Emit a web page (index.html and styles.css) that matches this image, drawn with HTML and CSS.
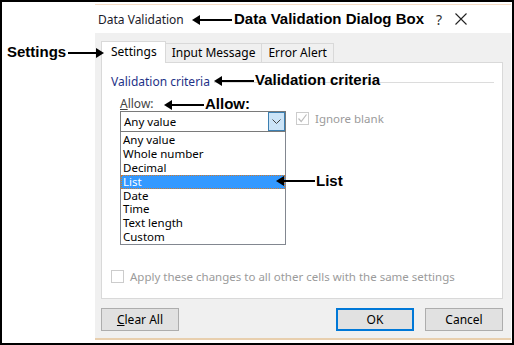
FILE: index.html
```html
<!DOCTYPE html>
<html>
<head>
	<title>Data Validation</title>
	<link rel="stylesheet" href="styles.css">
</head>
<body>
	<div class="frame">
		<div class="dialog">
			<div class="title-bar">
				<span class="title">Data Validation</span>
				<span class="help">?</span>
				<span class="close">
					<svg width="12" height="12" viewBox="0 0 12 12"><path d="M0.5 0.5 L11.5 11.5 M11.5 0.5 L0.5 11.5" stroke="#222" stroke-width="1.1"/></svg>
				</span>
			</div>
			<div class="dialog-body">
				<div class="tabs">
					<div class="tab active">Settings</div>
					<div class="tab">Input Message</div>
					<div class="tab">Error Alert</div>
				</div>
				<div class="panel">
					<div class="group-title">
						<span>Validation criteria</span>
						<div class="group-line"></div>
					</div>
					<div class="allow-label"><u>A</u>llow:</div>
					<div class="allow-row">
						<div class="combo-wrap">
							<div class="combo">
								<span class="combo-value">Any value</span>
								<span class="combo-btn">
									<svg width="9" height="6" viewBox="0 0 9 6"><path d="M0.5 0.5 L4.5 4.5 L8.5 0.5" fill="none" stroke="#444" stroke-width="1"/></svg>
								</span>
							</div>
							<ul class="dropdown">
								<li>Any value</li>
								<li>Whole number</li>
								<li>Decimal</li>
								<li class="selected">List</li>
								<li>Date</li>
								<li>Time</li>
								<li>Text length</li>
								<li>Custom</li>
							</ul>
						</div>
						<label class="check disabled">
							<span class="box">
								<svg width="11" height="11" viewBox="0 0 11 11"><path d="M1.5 5.5 L4.2 8.5 L9.5 1.5" fill="none" stroke="#bcbcbc" stroke-width="1.2"/></svg>
							</span>
							Ignore blank
						</label>
					</div>
					<label class="check disabled apply">
						<span class="box"></span>
						Apply these changes to all other cells with the same settings
					</label>
				</div>
				<div class="buttons">
					<button class="btn"><u>C</u>lear All</button>
					<div class="spacer"></div>
					<button class="btn primary">OK</button>
					<button class="btn">Cancel</button>
				</div>
			</div>
		</div>

		<div class="note note-title">Data Validation Dialog Box</div>
		<div class="arrow arrow-title"></div>
		<div class="note note-settings">Settings</div>
		<div class="arrow arrow-right arrow-settings"></div>
		<div class="note note-criteria">Validation criteria</div>
		<div class="arrow arrow-criteria"></div>
		<div class="note note-allow">Allow:</div>
		<div class="arrow arrow-allow"></div>
		<div class="note note-list">List</div>
		<div class="arrow arrow-list"></div>
	</div>
</body>
</html>
```

FILE: styles.css
```css
body {
	margin: 0;
	font-family: "Noto Sans", "Open Sans", sans-serif;
}

.frame {
	position: relative;
	width: 514px;
	height: 345px;
	box-sizing: border-box;
	border: 2px solid #000;
	background-color: #fff;
	overflow: hidden;
}

.dialog {
	margin: 2px 0 0 93px;
	width: 416px;
	height: 336px;
	box-sizing: border-box;
	border-top: 1px solid #f5dcc4;
	border-bottom: 2px solid #e8cfae;
	display: flex;
	flex-direction: column;
	background-color: #f0f0f0;
	font-size: 11.5px;
	color: #000;
}

.title-bar {
	height: 28px;
	background-color: #fff;
	display: flex;
	align-items: center;
	padding-left: 3px;
	font-size: 12px;
}

.title {
	flex-grow: 1;
	color: #1a1a2a;
}

.help {
	width: 19px;
	font-size: 14px;
	color: #333;
}

.close {
	width: 12px;
	height: 12px;
	margin-right: 44px;
	display: flex;
}

.dialog-body {
	flex-grow: 1;
	padding: 7px 6px 0 6px;
	display: flex;
	flex-direction: column;
}

.tabs {
	display: flex;
	align-items: flex-end;
	height: 22px;
}

.tab {
	height: 19px;
	box-sizing: border-box;
	padding: 0 6px;
	border: 1px solid #d9d9d9;
	border-bottom: none;
	border-left: none;
	line-height: 18px;
	font-size: 12px;
	background-color: #f0f0f0;
}

.tab.active {
	height: 22px;
	line-height: 20px;
	padding: 0 8px 0 9px;
	border-left: 1px solid #d9d9d9;
	background-color: #fff;
	margin-bottom: -1px;
	position: relative;
}

.panel {
	width: 402px;
	height: 237px;
	box-sizing: border-box;
	border: 1px solid #d9d9d9;
	background-color: #fff;
	padding: 10px 8px 0 9px;
}

.group-title {
	display: flex;
	align-items: center;
	font-size: 12px;
	color: #1e3287;
}

.group-line {
	flex-grow: 1;
	margin-left: 4px;
	margin-top: 2px;
	border-top: 1px solid #dcdcdc;
}

.allow-label {
	margin: 7px 0 0 9px;
	font-size: 12px;
	color: #444;
	height: 14px;
	line-height: 14px;
}

.allow-row {
	display: flex;
	align-items: flex-start;
	margin-left: 9px;
}

.combo-wrap {
	width: 166px;
}

.combo {
	height: 21px;
	box-sizing: border-box;
	border: 1px solid #7a7a7a;
	display: flex;
	align-items: center;
	font-size: 11.5px;
	padding-left: 3px;
}

.combo-value {
	flex-grow: 1;
}

.combo-btn {
	width: 17px;
	height: 19px;
	box-sizing: border-box;
	border: 1px solid #3c7fb1;
	background-color: #cce4f7;
	display: flex;
	align-items: center;
	justify-content: center;
}

.dropdown {
	list-style: none;
	margin: 0;
	padding: 1px 0 0;
	border: 1px solid #828790;
	border-top: none;
	font-size: 11.5px;
}

.dropdown li {
	height: 13.9px;
	line-height: 14px;
	padding-left: 2px;
	box-sizing: border-box;
}

.dropdown li.selected {
	background-color: #3399ff;
	color: #fff;
	outline: 1px dotted #d27a2a;
	outline-offset: -1px;
}

.check {
	display: flex;
	align-items: center;
	font-size: 11.5px;
	color: #9b9b9b;
}

.check .box {
	width: 11px;
	height: 11px;
	border: 1px solid #cccccc;
	background-color: #fff;
	margin-right: 6px;
	display: flex;
	align-items: center;
	justify-content: center;
}

.allow-row .check {
	margin-left: 10px;
}

.apply {
	margin-top: 24px;
}

.buttons {
	display: flex;
	width: 402px;
	margin-top: 9px;
}

.spacer {
	flex-grow: 1;
}

.btn {
	width: 78px;
	height: 23px;
	border: 1px solid #adadad;
	background-color: #e1e1e1;
	font-family: "Noto Sans", "Open Sans", sans-serif;
	font-size: 12px;
	padding: 0;
	margin-left: 11px;
}

.btn:first-child {
	margin-left: 0;
}

.btn.primary {
	border: 2px solid #0078d7;
}

.note {
	position: absolute;
	font-family: "Liberation Sans", Arial, sans-serif;
	font-weight: bold;
	font-size: 15px;
	color: #000;
	background-color: #fff;
	line-height: 16px;
}

.note-title {
	left: 232px;
	top: 9px;
}

.note-settings {
	left: 5px;
	top: 42px;
}

.note-criteria {
	left: 253px;
	top: 70px;
	background-color: transparent;
}

.note-allow {
	left: 203px;
	top: 94px;
	background-color: transparent;
}

.note-list {
	left: 314px;
	top: 171px;
	background-color: transparent;
}

.arrow {
	position: absolute;
	height: 2px;
	background-color: #000;
}

.arrow::before {
	content: "";
	position: absolute;
	left: -2px;
	top: -4px;
	border-right: 8px solid #000;
	border-top: 5px solid transparent;
	border-bottom: 5px solid transparent;
}

.arrow-right::before {
	left: auto;
	right: -2px;
	border-right: none;
	border-left: 8px solid #000;
}

.arrow-title {
	left: 192px;
	top: 17px;
	width: 38px;
}

.arrow-settings {
	left: 66px;
	top: 50px;
	width: 34px;
}

.arrow-criteria {
	left: 214px;
	top: 78px;
	width: 38px;
}

.arrow-allow {
	left: 164px;
	top: 102px;
	width: 38px;
}

.arrow-list {
	left: 276px;
	top: 178px;
	width: 37px;
}
```
